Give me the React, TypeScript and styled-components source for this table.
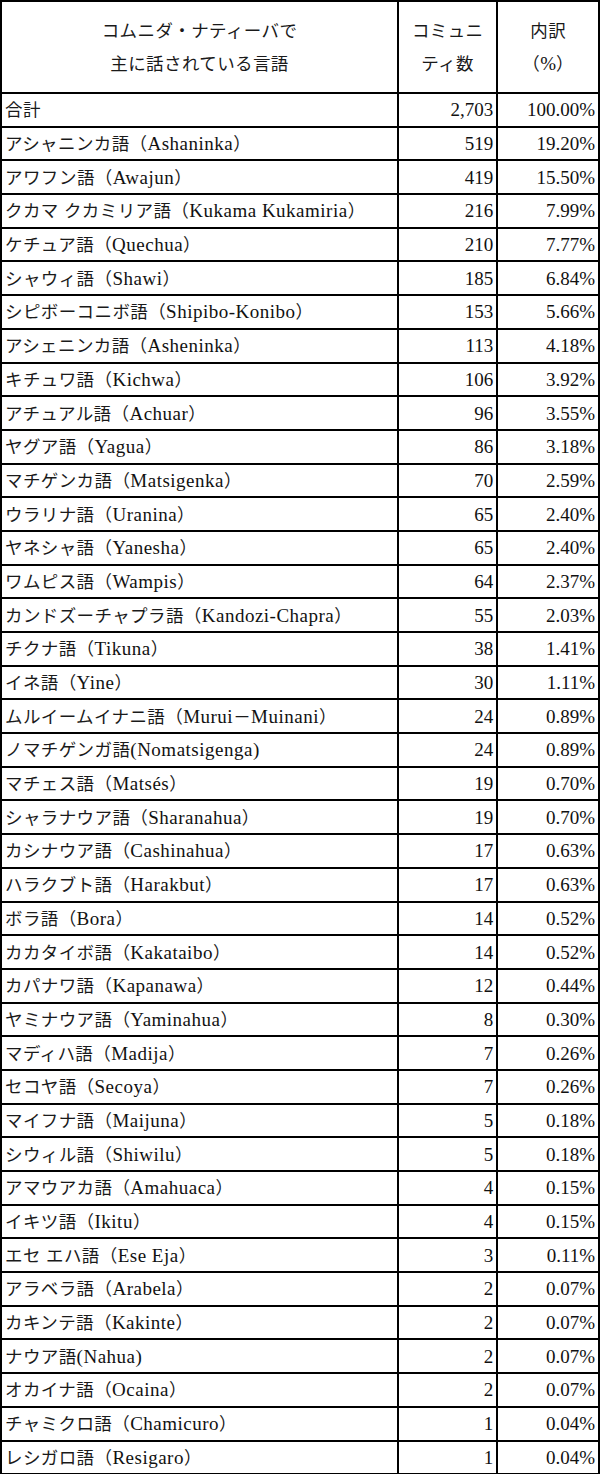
import styled, { createGlobalStyle } from "styled-components";

const GlobalStyle = createGlobalStyle`
  body {
    margin: 0;
    background: #fff;
  }
`;

const Table = styled.table`
  width: 600px;
  border-collapse: collapse;
  border: 2px solid #000;
  font-family: "Liberation Serif", "Noto Sans CJK JP", serif;
  font-size: 19px;
  color: #111;
  table-layout: fixed;
`;

const HeadCell = styled.th`
  height: 90px;
  border: 2px solid #000;
  font-weight: normal;
  text-align: center;
  line-height: 32px;
  padding: 0;
`;

const Row = styled.tr`
  height: 33.7px;
`;

const NameCell = styled.td`
  border: 2px solid #000;
  padding: 0 0 0 3px;
  text-align: left;
  white-space: nowrap;
  overflow: hidden;
  line-height: 1;
  letter-spacing: 0.5px;
`;

const NumCell = styled.td`
  border: 2px solid #000;
  padding: 0 3px 0 0;
  text-align: right;
  white-space: nowrap;
  line-height: 1;
`;

const Jp = styled.span`
  font-family: "Noto Sans CJK JP", sans-serif;
  font-size: 17.5px;
  letter-spacing: 0.4px;
  color: #1a1a1a;
`;

const CJK = /([\u3000-\u30ff\u4e00-\u9fff\uff00-\uffef]+)/;

const Mixed = ({ text }: { text: string }) => (
  <>
    {text
      .split(CJK)
      .filter((part) => part !== "")
      .map((part, i) =>
        CJK.test(part) ? <Jp key={i}>{part}</Jp> : <span key={i}>{part}</span>
      )}
  </>
);

type Lang = [string, string, string];

const rows: Lang[] = [
  ["合計", "2,703", "100.00%"],
  ["アシャニンカ語（Ashaninka）", "519", "19.20%"],
  ["アワフン語（Awajun）", "419", "15.50%"],
  ["クカマ クカミリア語（Kukama Kukamiria）", "216", "7.99%"],
  ["ケチュア語（Quechua）", "210", "7.77%"],
  ["シャウィ語（Shawi）", "185", "6.84%"],
  ["シピボーコニボ語（Shipibo-Konibo）", "153", "5.66%"],
  ["アシェニンカ語（Asheninka）", "113", "4.18%"],
  ["キチュワ語（Kichwa）", "106", "3.92%"],
  ["アチュアル語（Achuar）", "96", "3.55%"],
  ["ヤグア語（Yagua）", "86", "3.18%"],
  ["マチゲンカ語（Matsigenka）", "70", "2.59%"],
  ["ウラリナ語（Uranina）", "65", "2.40%"],
  ["ヤネシャ語（Yanesha）", "65", "2.40%"],
  ["ワムピス語（Wampis）", "64", "2.37%"],
  ["カンドズーチャプラ語（Kandozi-Chapra）", "55", "2.03%"],
  ["チクナ語（Tikuna）", "38", "1.41%"],
  ["イネ語（Yine）", "30", "1.11%"],
  ["ムルイームイナニ語（Murui－Muinani）", "24", "0.89%"],
  ["ノマチゲンガ語(Nomatsigenga)", "24", "0.89%"],
  ["マチェス語（Matsés）", "19", "0.70%"],
  ["シャラナウア語（Sharanahua）", "19", "0.70%"],
  ["カシナウア語（Cashinahua）", "17", "0.63%"],
  ["ハラクブト語（Harakbut）", "17", "0.63%"],
  ["ボラ語（Bora）", "14", "0.52%"],
  ["カカタイボ語（Kakataibo）", "14", "0.52%"],
  ["カパナワ語（Kapanawa）", "12", "0.44%"],
  ["ヤミナウア語（Yaminahua）", "8", "0.30%"],
  ["マディハ語（Madija）", "7", "0.26%"],
  ["セコヤ語（Secoya）", "7", "0.26%"],
  ["マイフナ語（Maijuna）", "5", "0.18%"],
  ["シウィル語（Shiwilu）", "5", "0.18%"],
  ["アマウアカ語（Amahuaca）", "4", "0.15%"],
  ["イキツ語（Ikitu）", "4", "0.15%"],
  ["エセ エハ語（Ese Eja）", "3", "0.11%"],
  ["アラベラ語（Arabela）", "2", "0.07%"],
  ["カキンテ語（Kakinte）", "2", "0.07%"],
  ["ナウア語(Nahua)", "2", "0.07%"],
  ["オカイナ語（Ocaina）", "2", "0.07%"],
  ["チャミクロ語（Chamicuro）", "1", "0.04%"],
  ["レシガロ語（Resigaro）", "1", "0.04%"],
];

export default function App() {
  return (
    <>
      <GlobalStyle />
      <Table>
        <colgroup>
          <col style={{ width: "66.4%" }} />
          <col style={{ width: "16.6%" }} />
          <col style={{ width: "17%" }} />
        </colgroup>
        <thead>
          <tr>
            <HeadCell>
              <Jp>コムニダ・ナティーバで</Jp>
              <br />
              <Jp>主に話されている言語</Jp>
            </HeadCell>
            <HeadCell>
              <Jp>コミュニ</Jp>
              <br />
              <Jp>ティ数</Jp>
            </HeadCell>
            <HeadCell>
              <Jp>内訳</Jp>
              <br />
              <Mixed text="（%）" />
            </HeadCell>
          </tr>
        </thead>
        <tbody>
          {rows.map(([name, count, share]) => (
            <Row key={name}>
              <NameCell>
                <Mixed text={name} />
              </NameCell>
              <NumCell>{count}</NumCell>
              <NumCell>{share}</NumCell>
            </Row>
          ))}
        </tbody>
      </Table>
    </>
  );
}
